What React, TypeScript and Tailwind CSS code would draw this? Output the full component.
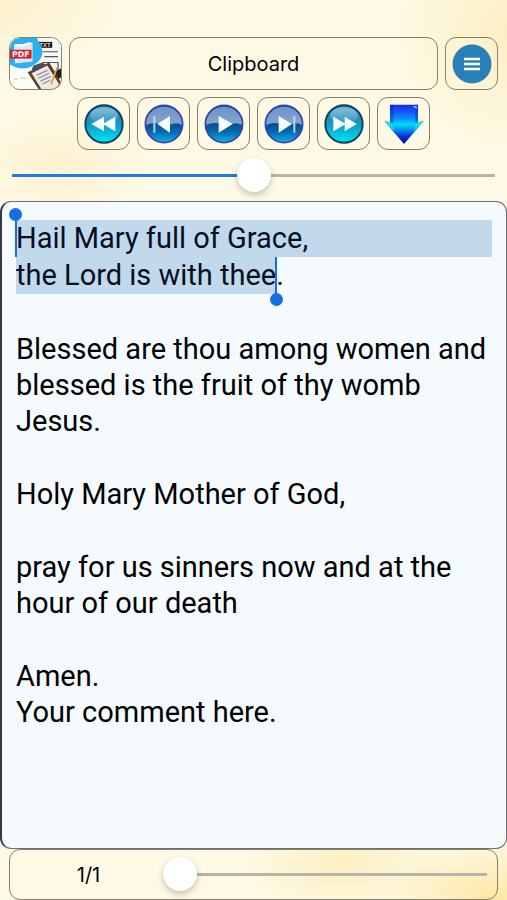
import { useState } from "react";

const playback = [
    { label: "Rewind", icon: <SkipIcon shapes={["M30 19v22L11 30z", "M47 19v22L28 30z"]} /> },
    { label: "Previous", icon: <GlossIcon shape="M39 18v25L20 30z" bar={14} /> },
    { label: "Play", icon: <GlossIcon shape="M22 18v25L43 30z" /> },
    { label: "Next", icon: <GlossIcon shape="M22 18v25L42 30z" bar={44} /> },
    { label: "Fast forward", icon: <SkipIcon shapes={["M14 19v22L33 30z", "M31 19v22L49 30z"]} /> },
    { label: "Download", icon: <ArrowIcon /> },
];

const paragraphs = [
    "Blessed are thou among women and blessed is the fruit of thy womb Jesus.",
    "Holy Mary Mother of God,",
    "pray for us sinners now and at the hour of our death",
    "Amen.\nYour comment here.",
];

const box = "shrink-0 flex items-center justify-center size-[53px] rounded-[11px] border border-[#85806c] overflow-hidden";

const range =
    "block w-full h-[34px] appearance-none bg-transparent " +
    "[&::-webkit-slider-runnable-track]:h-[3px] [&::-webkit-slider-runnable-track]:bg-[linear-gradient(to_right,#1c7de6_var(--fill),#b5b5ac_var(--fill))] " +
    "[&::-webkit-slider-thumb]:appearance-none [&::-webkit-slider-thumb]:size-[34px] [&::-webkit-slider-thumb]:-mt-4 [&::-webkit-slider-thumb]:rounded-full [&::-webkit-slider-thumb]:bg-white [&::-webkit-slider-thumb]:shadow-[0_3px_6px_rgba(0,0,0,0.22)]";

function SkipIcon({ shapes }: { shapes: string[] }) {
    return (
        <svg viewBox="0 0 60 60" className="size-10">
            <defs>
                <linearGradient id="skip" x1="0" y1="0" x2="0" y2="1">
                    <stop offset="0" stopColor="#2a86b4" />
                    <stop offset="0.5" stopColor="#1a94c6" />
                    <stop offset="0.75" stopColor="#08c0e0" />
                    <stop offset="1" stopColor="#00e6f4" />
                </linearGradient>
                <linearGradient id="skipShine" x1="0" y1="0" x2="0" y2="1">
                    <stop offset="0" stopColor="#ffffff" stopOpacity="0.45" />
                    <stop offset="1" stopColor="#ffffff" stopOpacity="0.08" />
                </linearGradient>
            </defs>
            <circle cx="30" cy="30" r="28" fill="url(#skip)" stroke="#12435a" strokeWidth="3" />
            <ellipse cx="30" cy="17" rx="21" ry="12" fill="url(#skipShine)" />
            {shapes.map((shape) => (
                <path key={shape} d={shape} fill="#f4fbff" />
            ))}
        </svg>
    );
}

function GlossIcon({ shape, bar }: { shape: string; bar?: number }) {
    return (
        <svg viewBox="0 0 60 60" className="size-10">
            <defs>
                <linearGradient id="gloss" x1="0" y1="0" x2="0" y2="1">
                    <stop offset="0.45" stopColor="#07488c" />
                    <stop offset="0.7" stopColor="#0567ab" />
                    <stop offset="1" stopColor="#08b4e6" />
                </linearGradient>
                <linearGradient id="glossTop" x1="0" y1="0" x2="0" y2="1">
                    <stop offset="0" stopColor="#6a94c8" />
                    <stop offset="1" stopColor="#88a5c9" />
                </linearGradient>
            </defs>
            <circle cx="30" cy="30" r="28" fill="url(#gloss)" />
            <path d="M2 32A28 28 0 0 1 58 32Q50 27 42 30T26 30Q14 26 2 32Z" fill="url(#glossTop)" />
            <circle cx="30" cy="30" r="28" fill="none" stroke="#3a44b0" strokeWidth="2.5" />
            {bar && <path d={`M${bar} 18h3v25h-3z`} fill="#bcd3ec" />}
            <path d={shape} fill="#f6f9ff" />
        </svg>
    );
}

function ArrowIcon() {
    return (
        <svg viewBox="0 0 60 60" className="size-10">
            <defs>
                <linearGradient id="arrow" x1="0" y1="0" x2="0" y2="1">
                    <stop offset="0" stopColor="#1430dc" />
                    <stop offset="0.12" stopColor="#1746fa" />
                    <stop offset="0.35" stopColor="#0b8cfa" />
                    <stop offset="0.5" stopColor="#02dcf6" />
                    <stop offset="0.64" stopColor="#0690ec" />
                    <stop offset="0.8" stopColor="#0a32d4" />
                    <stop offset="1" stopColor="#0a0a96" />
                </linearGradient>
            </defs>
            <path d="M9 1h42v27l9-3L30 60 0 25l9 3z" fill="url(#arrow)" />
            <path d="M9 1h5v28l-5-1zM51 1h-4v28l4-1z" fill="#0a1cc0" opacity="0.4" />
            <path d="M0 25l11 3 5 13zM60 25l-11 3-5 13z" fill="#1ce0e2" opacity="0.75" />
            <path d="M43 3h6v5z" fill="#8fb0ff" />
        </svg>
    );
}

function AppIcon() {
    return (
        <svg viewBox="0 0 52 52" className="size-full bg-[#fdfdf8]">
            <path d="M27 0h25v33H27z" fill="#f7f7f4" />
            <path d="M27 0v14M33 14h16M35 19h14M33 25h16v8" fill="none" stroke="#55534f" strokeWidth="1.2" />
            <rect x="28" y="4" width="15" height="6" fill="#151515" />
            <text x="30" y="9" fontSize="6" fontWeight="700" fill="#d6d6d6" fontFamily="Liberation Sans, sans-serif">TXT</text>
            <path d="M0 27Q14 35 25 27Q37 19 31 7L27 0H4Q0 3 0 6Z" fill="#28b2f1" />
            <path d="M4 7l19-2v19l-18 2z" fill="#dce7ee" />
            <path d="M4 7Q12 11 23 5l-4-1Q11 8 8 6z" fill="#fafdff" />
            <rect x="0" y="12" width="22" height="9" fill="#d3222b" />
            <text x="2" y="19" fontSize="8" fontWeight="700" fill="#ffffff" fontFamily="DejaVu Sans, sans-serif">PDF</text>
            <path d="M4 42h4M10 41h6" stroke="#d9d7c2" strokeWidth="1.5" />
            <path d="M52 31l-8 4 4 8 4-3z" fill="#24201e" />
            <path d="M18 35l22-10 12 20v7H29z" fill="#643c2c" />
            <path d="M22 36l16-8 12 19-4 5H32z" fill="#eceae8" />
            <path d="M22 32l2-4 9-3 3 2-11 7z" fill="#4c4e63" />
            <path d="M27 38l11-5M29 41l11-5M31 44l11-5M33 47l8-4" stroke="#8c8b8b" strokeWidth="1.2" />
            <path d="M48 30l-6 17" stroke="#d9a53a" strokeWidth="1.8" />
        </svg>
    );
}

export default function App() {
    const [position, setPosition] = useState(50);
    const [page, setPage] = useState(0);

    return (
        <main className="flex min-h-screen flex-col bg-[#fef9e4] bg-[radial-gradient(ellipse_120px_70px_at_0_0,#fdf0cc,transparent),radial-gradient(ellipse_110px_120px_at_100%_30px,#fcefc4,transparent),radial-gradient(ellipse_90px_50px_at_60px_165px,#fdf1d0,transparent),radial-gradient(ellipse_110px_60px_at_97%_100%,#fde7a2,transparent),radial-gradient(ellipse_100px_50px_at_68%_96%,#fdefc0,transparent)] pt-[37px] font-[Inter,'Liberation_Sans',sans-serif] text-black">
            <header className="px-[9px]">
                <div className="flex gap-[7px]">
                    <button aria-label="Open document" className={box}>
                        <AppIcon />
                    </button>
                    <h1 className="flex flex-1 items-center justify-center rounded-[11px] border border-[#85806c] text-xl">
                        Clipboard
                    </h1>
                    <button aria-label="Menu" className={box}>
                        <svg viewBox="0 0 40 40" className="size-10">
                            <circle cx="20" cy="20" r="19.5" fill="#2980b9" />
                            <path d="M12 15h16M12 20h16M12 25h16" stroke="#ffffff" strokeWidth="2.5" />
                        </svg>
                    </button>
                </div>
                <div className="mt-[7px] flex justify-center gap-[7px]">
                    {playback.map((item) => (
                        <button key={item.label} aria-label={item.label} className={box}>
                            {item.icon}
                        </button>
                    ))}
                </div>
            </header>

            <div className="px-3 py-2">
                <input
                    type="range"
                    aria-label="Reading position"
                    value={position}
                    onChange={(e) => setPosition(Number(e.target.value))}
                    style={{ "--fill": `${position}%` } as React.CSSProperties}
                    className={range}
                />
            </div>

            <div
                role="textbox"
                aria-multiline="true"
                aria-label="Clipboard text"
                contentEditable
                suppressContentEditableWarning
                spellCheck={false}
                className="mt-px flex flex-1 flex-col gap-[37px] rounded-[11px] border border-l-2 border-[#6f6f6c] border-l-[#3a3a3e] bg-[#f5faff] px-3.5 pt-[18px] pb-4 font-[Roboto,'Liberation_Sans',sans-serif] text-[29px] leading-[36px]"
            >
                <p className="leading-[37px]">
                    <mark className="relative block bg-[#c2d8eb] text-[#04101f]">
                        Hail Mary full of Grace,
                        <span className="absolute -left-px top-0 h-full w-0.5 bg-[#156fde]" />
                        <span className="absolute -left-[7px] -top-3 size-[13px] rounded-full bg-[#156fde]" />
                    </mark>
                    <mark className="relative inline-block bg-[#c2d8eb] text-[#04101f]">
                        the Lord is with thee
                        <span className="absolute -right-px top-0 h-full w-0.5 bg-[#156fde]" />
                        <span className="absolute -right-[7px] -bottom-3 size-[13px] rounded-full bg-[#156fde]" />
                    </mark>
                    .
                </p>
                {paragraphs.map((text) => (
                    <p key={text} className="whitespace-pre-line">{text}</p>
                ))}
            </div>

            <footer className="mx-[9px] flex h-[51px] items-center rounded-[11px] border border-[#85806c] pr-2.5">
                <label htmlFor="page" className="w-[153px] pl-1 text-center text-xl">1/1</label>
                <div className="flex-1">
                    <input
                        id="page"
                        type="range"
                        value={page}
                        onChange={(e) => setPage(Number(e.target.value))}
                        style={{ "--fill": `${page}%` } as React.CSSProperties}
                        className={range}
                    />
                </div>
            </footer>
        </main>
    );
}
